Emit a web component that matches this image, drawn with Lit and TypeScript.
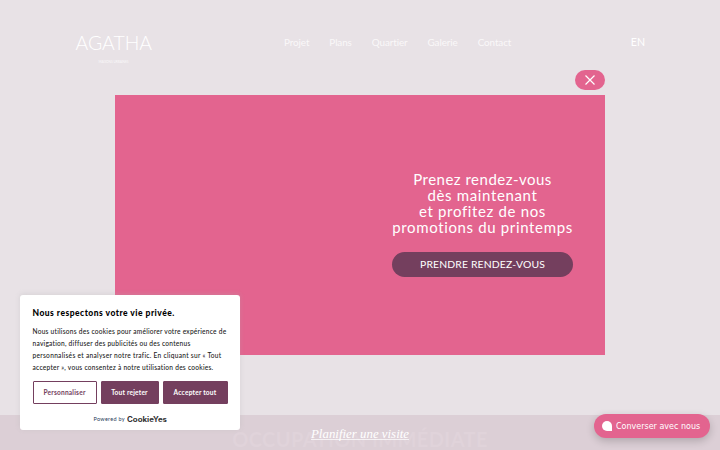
import { LitElement, html, css } from 'lit';
import { customElement } from 'lit/decorators.js';

const links = ['Projet', 'Plans', 'Quartier', 'Galerie', 'Contact'];

@customElement('site-header')
export class SiteHeader extends LitElement {
  static styles = css`
    :host {
      display: flex;
      align-items: flex-start;
      height: 85px;
      box-sizing: border-box;
      padding: 34px 75px 0 74px;
      color: #faf8f9;
    }

    .logo {
      display: block;
      flex: none;
      width: 80px;
      height: 30px;
      margin-right: 130px;
      color: #fff;
      overflow: visible;
    }

    .logo text {
      fill: currentColor;
      font-family: Lato, sans-serif;
    }

    .wordmark {
      font-size: 20.5px;
      font-weight: 300;
    }

    .tagline {
      font-size: 3.2px;
      opacity: 0.8;
    }

    nav {
      display: flex;
      gap: 20px;
      font-size: 9.9px;
      line-height: 16px;
    }

    .link {
      letter-spacing: -0.1px;
    }

    .lang {
      margin-left: auto;
      color: #fff;
      font-size: 10.6px;
      line-height: 16px;
    }
  `;

  render() {
    return html`
      <svg class="logo" viewBox="0 0 80 30">
        <text class="wordmark" x="1.5" y="15.7" textLength="76.5" lengthAdjust="spacingAndGlyphs">AGATHA</text>
        <text class="tagline" x="24.5" y="28.5" textLength="30">MAISONS URBAINES</text>
      </svg>
      <nav>${links.map((label) => html`<span class="link">${label}</span>`)}</nav>
      <span class="lang">EN</span>
    `;
  }
}

@customElement('promo-popup')
export class PromoPopup extends LitElement {
  static styles = css`
    :host {
      display: flex;
      flex-direction: column;
      gap: 5px;
      width: 490px;
    }

    .close {
      display: flex;
      align-items: center;
      justify-content: center;
      align-self: flex-end;
      width: 30px;
      height: 20px;
      padding: 0;
      border: 0;
      border-radius: 10px;
      background: #e3648f;
    }

    .close svg {
      width: 10px;
      height: 10px;
      stroke: #fff;
      stroke-width: 1.2;
    }

    .panel {
      display: flex;
      flex-direction: column;
      align-items: flex-end;
      box-sizing: border-box;
      height: 260px;
      padding: 76px 32px 0;
      background: #e3648f;
      color: #fff;
    }

    .message {
      width: 181px;
      margin: 0;
      text-align: center;
      font-size: 15px;
      font-weight: 400;
      line-height: 16px;
      letter-spacing: 0.5px;
      white-space: nowrap;
    }

    .line {
      display: block;
    }

    .l2,
    .l3,
    .l4 {
      letter-spacing: 0.65px;
    }

    .cta {
      width: 181px;
      height: 25px;
      margin-top: 17px;
      border-radius: 12.5px;
      background: #743f5e;
      text-align: center;
      font-size: 10.4px;
      line-height: 24px;
      letter-spacing: 0.14px;
    }
  `;

  render() {
    return html`
      <button class="close" aria-label="Fermer">
        <svg viewBox="0 0 10 10"><path d="M.5.5l9 9M9.5.5l-9 9" /></svg>
      </button>
      <div class="panel">
        <h2 class="message">
          <span class="line l1">Prenez rendez-vous</span>
          <span class="line l2">dès maintenant</span>
          <span class="line l3">et profitez de nos</span>
          <span class="line l4">promotions du printemps</span>
        </h2>
        <div class="cta">PRENDRE RENDEZ-VOUS</div>
      </div>
    `;
  }
}

@customElement('cookie-notice')
export class CookieNotice extends LitElement {
  static styles = css`
    :host {
      display: block;
      box-sizing: border-box;
      width: 220px;
      height: 135px;
      padding: 12px 12px 0 12.5px;
      border-radius: 3px;
      background: #fff;
      box-shadow: 0 -1px 5px rgba(172, 171, 171, 0.3);
      color: #212121;
    }

    .title {
      margin: 0 0 6px;
      color: #000;
      font-size: 8.5px;
      font-weight: 900;
      line-height: 12px;
      letter-spacing: 0.48px;
    }

    .copy {
      margin: 0;
      font-size: 6.6px;
      font-weight: 500;
      line-height: 12px;
      white-space: nowrap;
    }

    .line {
      display: block;
    }

    .l1,
    .l2 {
      letter-spacing: 0.24px;
    }

    .l3 {
      letter-spacing: 0.29px;
    }

    .l4 {
      letter-spacing: 0.25px;
    }

    .actions {
      display: flex;
      gap: 4px;
      margin-top: 8px;
    }

    .button {
      box-sizing: border-box;
      height: 23px;
      border: 1px solid #743f5e;
      border-radius: 1px;
      background: #743f5e;
      color: #fff;
      text-align: center;
      font-size: 6.6px;
      font-weight: 700;
      line-height: 21px;
      letter-spacing: 0.2px;
    }

    .customize {
      width: 64px;
      background: #fff;
      color: #743f5e;
    }

    .reject {
      width: 58px;
    }

    .accept {
      width: 65px;
    }

    .powered {
      display: flex;
      align-items: center;
      justify-content: center;
      gap: 2px;
      height: 12px;
      margin-top: 9px;
      color: #293c5b;
      font-size: 5.5px;
    }

    .by {
      letter-spacing: 0.28px;
    }

    .brand {
      width: 40px;
      height: 10px;
    }

    .brand text {
      fill: #333;
      font: 700 7.3px Inter, sans-serif;
    }
  `;

  render() {
    return html`
      <h3 class="title">Nous respectons votre vie privée.</h3>
      <p class="copy">
        <span class="line l1">Nous utilisons des cookies pour améliorer votre expérience de</span>
        <span class="line l2">navigation, diffuser des publicités ou des contenus</span>
        <span class="line l3">personnalisés et analyser notre trafic. En cliquant sur « Tout</span>
        <span class="line l4">accepter », vous consentez à notre utilisation des cookies.</span>
      </p>
      <div class="actions">
        <div class="button customize">Personnaliser</div>
        <div class="button reject">Tout rejeter</div>
        <div class="button accept">Accepter tout</div>
      </div>
      <div class="powered">
        <span class="by">Powered by</span>
        <svg class="brand" viewBox="0 0 40 10">
          <text x="0" y="8" textLength="40" lengthAdjust="spacingAndGlyphs">CookieYes</text>
        </svg>
      </div>
    `;
  }
}

@customElement('chat-button')
export class ChatButton extends LitElement {
  static styles = css`
    :host {
      display: flex;
      align-items: center;
      gap: 4px;
      box-sizing: border-box;
      width: 116px;
      height: 24px;
      padding-left: 8px;
      border-radius: 12px;
      background: #e3648f;
      box-shadow: 0 3px 8px rgba(0, 0, 0, 0.2);
      color: #fff;
      font: 8px 'DejaVu Sans', sans-serif;
      white-space: nowrap;
    }

    svg {
      flex: none;
      width: 10px;
      height: 10px;
      fill: #fff;
    }
  `;

  render() {
    return html`
      <svg viewBox="0 0 10 10"><path d="M5 0a5 5 0 0 1 5 5v5H5A5 5 0 0 1 5 0z" /></svg>
      <span>Converser avec nous</span>
    `;
  }
}

@customElement('app-root')
export class AppRoot extends LitElement {
  static styles = css`
    :host {
      display: flex;
      flex-direction: column;
      position: relative;
      height: 450px;
      overflow: hidden;
      background: #e8e2e6;
      font-family: Lato, sans-serif;
    }

    site-header {
      flex: none;
    }

    .visit {
      position: relative;
      display: flex;
      justify-content: center;
      height: 35px;
      margin-top: auto;
      background: #dccfd6;
    }

    .headline {
      margin: 14px 0 0;
      color: #e0d3da;
      font-size: 20px;
      font-weight: 700;
      line-height: 21px;
      letter-spacing: 0.4px;
      white-space: nowrap;
    }

    .visit svg {
      position: absolute;
      left: 305px;
      top: 7px;
      width: 110px;
      height: 22px;
    }

    .visit text {
      fill: #fff;
      font: italic 13px 'Liberation Serif', serif;
    }

    .underline {
      stroke: #fff;
      stroke-width: 0.7;
    }

    promo-popup {
      position: absolute;
      left: 115px;
      top: 70px;
    }

    cookie-notice {
      position: absolute;
      left: 20px;
      bottom: 20px;
    }

    chat-button {
      position: absolute;
      right: 10px;
      bottom: 12px;
    }
  `;

  render() {
    return html`
      <site-header></site-header>
      <div class="visit">
        <p class="headline">OCCUPATION IMMÉDIATE</p>
        <svg viewBox="0 0 110 22">
          <text x="6" y="16" textLength="98" lengthAdjust="spacingAndGlyphs">Planifier une visite</text>
          <path class="underline" d="M6 17.5h98" />
        </svg>
      </div>
      <promo-popup></promo-popup>
      <cookie-notice></cookie-notice>
      <chat-button></chat-button>
    `;
  }
}

declare global {
  interface HTMLElementTagNameMap {
    'app-root': AppRoot;
  }
}
